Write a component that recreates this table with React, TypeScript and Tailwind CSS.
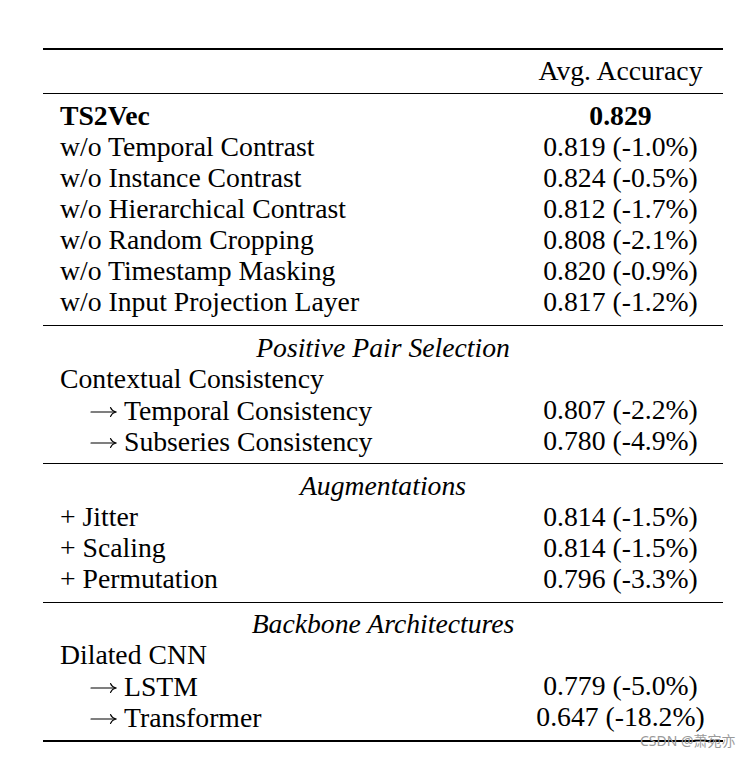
import React from "react";

type Row = { label: React.ReactNode; value?: string; bold?: boolean; arrow?: boolean };

const block1: Row[] = [
  { label: "TS2Vec", value: "0.829", bold: true },
  { label: "w/o Temporal Contrast", value: "0.819 (-1.0%)" },
  { label: "w/o Instance Contrast", value: "0.824 (-0.5%)" },
  { label: "w/o Hierarchical Contrast", value: "0.812 (-1.7%)" },
  { label: "w/o Random Cropping", value: "0.808 (-2.1%)" },
  { label: "w/o Timestamp Masking", value: "0.820 (-0.9%)" },
  { label: "w/o Input Projection Layer", value: "0.817 (-1.2%)" },
];

const block2: Row[] = [
  { label: "Contextual Consistency" },
  { label: "Temporal Consistency", value: "0.807 (-2.2%)", arrow: true },
  { label: "Subseries Consistency", value: "0.780 (-4.9%)", arrow: true },
];

const block3: Row[] = [
  { label: "+ Jitter", value: "0.814 (-1.5%)" },
  { label: "+ Scaling", value: "0.814 (-1.5%)" },
  { label: "+ Permutation", value: "0.796 (-3.3%)" },
];

const block4: Row[] = [
  { label: "Dilated CNN" },
  { label: "LSTM", value: "0.779 (-5.0%)", arrow: true },
  { label: "Transformer", value: "0.647 (-18.2%)", arrow: true },
];

function Arrow() {
  return (
    <span className="inline-flex items-center w-[64px] pl-[30px] h-[31px] pt-[3px]">
      <svg width="27" height="14" viewBox="0 0 27 14" fill="none" stroke="black" strokeWidth="1.1" strokeLinecap="round">
        <path d="M1 7 H25.5" />
        <path d="M20.5 2.5 Q21.8 5.8 25.8 7 Q21.8 8.2 20.5 11.5" />
      </svg>
    </span>
  );
}

function Rows({ rows }: { rows: Row[] }) {
  return (
    <>
      {rows.map((r, i) => (
        <React.Fragment key={i}>
          <div className={`h-[31px] leading-[31px] whitespace-nowrap ${r.bold ? "font-bold" : ""}`}>
            {r.arrow ? (
              <span className="inline-flex">
                <Arrow />
                <span>{r.label}</span>
              </span>
            ) : (
              r.label
            )}
          </div>
          <div className={`h-[31px] leading-[31px] text-center whitespace-nowrap ${r.bold ? "font-bold" : ""}`}>
            {r.value ?? ""}
          </div>
        </React.Fragment>
      ))}
    </>
  );
}

function Section({ title }: { title: string }) {
  return <div className="col-span-2 h-[31px] leading-[31px] text-center italic">{title}</div>;
}

export default function App() {
  return (
    <div className="relative w-[756px] h-[760px] bg-white text-black overflow-hidden font-['Liberation_Serif','Times_New_Roman',serif]">
      <div className="pt-[48px] pl-[43px] w-[723px] text-[27.7px]">
        <div className="w-[680px]">
          <div className="h-[2px] bg-black" />
          <div className="grid grid-cols-[1fr_171px] px-[17px] pt-[5px] pb-[7px]">
            <div className="h-[31px]" />
            <div className="h-[31px] leading-[31px] text-center whitespace-nowrap">Avg. Accuracy</div>
          </div>
          <div className="h-px bg-black" />
          <div className="grid grid-cols-[1fr_171px] px-[17px] pt-[6px] pb-[8px]">
            <Rows rows={block1} />
          </div>
          <div className="h-px bg-black" />
          <div className="grid grid-cols-[1fr_171px] px-[17px] pt-[6px] pb-[7px]">
            <Section title="Positive Pair Selection" />
            <Rows rows={block2} />
          </div>
          <div className="h-px bg-black" />
          <div className="grid grid-cols-[1fr_171px] px-[17px] pt-[6px] pb-[8px]">
            <Section title="Augmentations" />
            <Rows rows={block3} />
          </div>
          <div className="h-px bg-black" />
          <div className="grid grid-cols-[1fr_171px] px-[17px] pt-[5px] pb-[8px]">
            <Section title="Backbone Architectures" />
            <Rows rows={block4} />
          </div>
          <div className="h-[2px] bg-black" />
        </div>
      </div>
      <div className="absolute left-[640px] top-[733px] text-[14px] leading-[16px] text-[#9a9a9a] whitespace-nowrap font-['Noto_Sans','Noto_Sans_CJK_SC',sans-serif]">
        CSDN @萧宛亦
      </div>
    </div>
  );
}
